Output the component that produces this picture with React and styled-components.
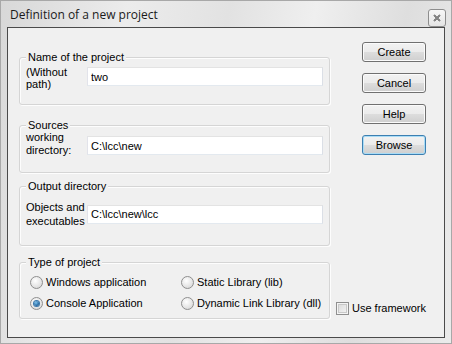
import React from "react";
import styled, { createGlobalStyle } from "styled-components";

const GlobalStyle = createGlobalStyle`
  html, body {
    margin: 0;
    padding: 0;
  }
  body {
    font-family: "Liberation Sans", Arial, sans-serif;
    font-size: 11px;
    color: #000;
  }
`;

const Window = styled.div`
  width: 452px;
  height: 344px;
  box-sizing: border-box;
  display: flex;
  flex-direction: column;
  background: linear-gradient(
    100deg,
    #d8d8d8 0%,
    #ececec 25%,
    #e2e2e2 45%,
    #efefef 62%,
    #dedede 80%,
    #ebebeb 100%
  );
  border: 1px solid #a8a8a8;
`;

const TitleBar = styled.div`
  height: 26px;
  flex-shrink: 0;
  display: flex;
  align-items: center;
  justify-content: space-between;
  padding: 0 5px 0 9px;
`;

const Title = styled.div`
  font-family: "Open Sans", "DejaVu Sans", sans-serif;
  font-size: 12px;
  color: #1a1a1a;
  margin-top: 1px;
`;

const CloseButton = styled.div`
  width: 16px;
  height: 16px;
  margin-top: 8px;
  border: 1px solid #8d8d8d;
  border-radius: 3px;
  background: linear-gradient(#f7f7f7, #e4e4e4);
  display: flex;
  align-items: center;
  justify-content: center;
`;

const Client = styled.div`
  flex: 1;
  min-height: 0;
  margin: 0 6px 5px 6px;
  border: 1px solid #4a4a4a;
  background: #f0f0f0;
  display: flex;
  padding-left: 11px;
`;

const LeftColumn = styled.div`
  width: 311px;
  display: flex;
  flex-direction: column;
`;

const Group = styled.section`
  position: relative;
  box-sizing: border-box;
  margin-top: ${(p) => p.$mt}px;
  height: ${(p) => p.$h}px;
  padding: ${(p) => p.$pt}px 5px 0 6px;
  border: 1px solid #d5d5d5;
  border-radius: 3px;
  box-shadow: inset 1px 1px 0 #fdfdfd, 1px 1px 0 #fdfdfd;
`;

const Legend = styled.span`
  position: absolute;
  top: -7px;
  left: 6px;
  padding: 0 2px;
  line-height: 13px;
  background: #f0f0f0;
`;

const FieldRow = styled.div`
  display: flex;
  align-items: center;
`;

const FieldLabel = styled.div`
  width: 61px;
  flex-shrink: 0;
  line-height: ${(p) => p.$lh || 13}px;
  padding-top: ${(p) => p.$pt || 0}px;
  padding-bottom: ${(p) => p.$pb || 0}px;
`;

const TextInput = styled.input`
  width: 236px;
  height: 19px;
  box-sizing: border-box;
  border: 1px solid #abadb3;
  border-top-color: #e3e3e3;
  border-left-color: #e2e3ea;
  border-right-color: #dbdfe6;
  border-bottom-color: #e3e9ef;
  padding: 0 0 0 3px;
  font-family: "Liberation Sans", Arial, sans-serif;
  font-size: 11px;
  color: #000;
  background: #fff;
  outline: none;
`;

const RadioGrid = styled.div`
  display: grid;
  grid-template-columns: 151px 1fr;
  row-gap: 5px;
  padding-left: 4px;
`;

const RadioItem = styled.label`
  display: flex;
  align-items: center;
  height: 16px;
  gap: 3px;
`;

const RadioCircle = styled.span`
  width: 11px;
  height: 11px;
  border-radius: 50%;
  border: 1px solid #8f8f8f;
  background: radial-gradient(circle at 40% 35%, #ffffff 0%, #e6e6e6 55%, #cfcfcf 100%);
  display: flex;
  align-items: center;
  justify-content: center;
  flex-shrink: 0;

  &::after {
    content: "";
    display: ${(p) => (p.$checked ? "block" : "none")};
    width: 5px;
    height: 5px;
    border-radius: 50%;
    background: radial-gradient(circle at 40% 35%, #7fc3ee 0%, #2a6fa8 60%, #0d3f6e 100%);
    box-shadow: 0 0 0 1px #3a78ac;
  }
`;

const RightColumn = styled.div`
  flex: 1;
  display: flex;
  flex-direction: column;
  padding: 14px 0 22px 6px;
`;

const ButtonStack = styled.div`
  display: flex;
  flex-direction: column;
  align-items: flex-end;
  gap: 11px;
  padding-right: 18px;
`;

const Button = styled.button`
  width: 64px;
  height: 20px;
  box-sizing: border-box;
  padding: 0;
  border: 1px solid ${(p) => (p.$default ? "#3c7fb1" : "#707070")};
  border-radius: 3px;
  background: linear-gradient(#f2f2f2 0%, #ebebeb 50%, #dddddd 51%, #cfcfcf 100%);
  box-shadow: inset 0 0 0 1px ${(p) => (p.$default ? "#a9dcf6" : "#fbfbfb")};
  font-family: "Liberation Sans", Arial, sans-serif;
  font-size: 11px;
  color: #000;
`;

const CheckRow = styled.label`
  margin-top: auto;
  display: flex;
  align-items: center;
  gap: 3px;
  height: 14px;
`;

const CheckBox = styled.span`
  width: 11px;
  height: 11px;
  border: 1px solid #8f8f8f;
  background: linear-gradient(135deg, #d8d8d8, #f6f6f6);
  box-shadow: inset 0 0 0 1px #f4f4f4, inset 0 0 0 2px #c9c9c9;
`;

const CloseIcon = () => (
  <svg width="8" height="8" viewBox="0 0 8 8">
    <path d="M1 1 L7 7 M7 1 L1 7" stroke="#3a3a3a" strokeWidth="1.6" fill="none" />
    <path d="M1 1 L7 7 M7 1 L1 7" stroke="#d0d0d0" strokeWidth="0.5" fill="none" />
  </svg>
);

const Radio = ({ checked, children }) => (
  <RadioItem>
    <RadioCircle $checked={checked} />
    {children}
  </RadioItem>
);

export default function App() {
  return (
    <>
      <GlobalStyle />
      <Window>
        <TitleBar>
          <Title>Definition of a new project</Title>
          <CloseButton>
            <CloseIcon />
          </CloseButton>
        </TitleBar>
        <Client>
          <LeftColumn>
            <Group $mt={29} $h={48} $pt={5}>
              <Legend>Name of the project</Legend>
              <FieldRow>
                <FieldLabel $lh={12} $pt={3}>
                  (Without
                  <br />
                  path)
                </FieldLabel>
                <TextInput defaultValue="two" />
              </FieldRow>
            </Group>
            <Group $mt={20} $h={48} $pt={5}>
              <Legend>Sources</Legend>
              <FieldRow>
                <FieldLabel $pb={3}>
                  working
                  <br />
                  directory:
                </FieldLabel>
                <TextInput defaultValue="C:\lcc\new" />
              </FieldRow>
            </Group>
            <Group $mt={13} $h={60} $pt={13}>
              <Legend>Output directory</Legend>
              <FieldRow>
                <FieldLabel $lh={14}>
                  Objects and
                  <br />
                  executables
                </FieldLabel>
                <TextInput defaultValue="C:\lcc\new\lcc" />
              </FieldRow>
            </Group>
            <Group $mt={16} $h={57} $pt={11}>
              <Legend>Type of project</Legend>
              <RadioGrid>
                <Radio>Windows application</Radio>
                <Radio>Static Library (lib)</Radio>
                <Radio checked>Console Application</Radio>
                <Radio>Dynamic Link Library (dll)</Radio>
              </RadioGrid>
            </Group>
          </LeftColumn>
          <RightColumn>
            <ButtonStack>
              <Button>Create</Button>
              <Button>Cancel</Button>
              <Button>Help</Button>
              <Button $default>Browse</Button>
            </ButtonStack>
            <CheckRow>
              <CheckBox />
              Use framework
            </CheckRow>
          </RightColumn>
        </Client>
      </Window>
    </>
  );
}
